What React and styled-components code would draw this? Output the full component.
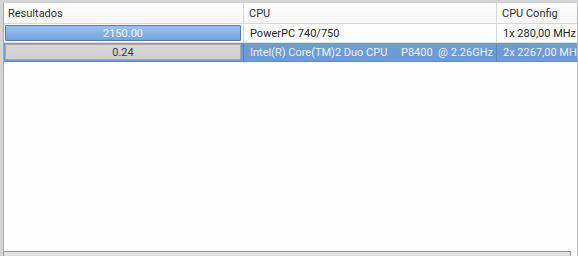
import React from 'react';
import styled, { createGlobalStyle } from 'styled-components';

const GlobalStyle = createGlobalStyle`
  html, body {
    margin: 0;
    padding: 0;
    background: #d4d4d4;
  }
  body {
    font-family: Roboto, "Noto Sans", sans-serif;
  }
`;

const rows = [
  { value: 2150, cpu: 'PowerPC 740/750', config: '1x 280,00 MHz', selected: false },
  { value: 0.24, cpu: 'Intel(R) Core(TM)2 Duo CPU     P8400  @ 2.26GHz', config: '2x 2267,00 MHz', selected: true },
];

function App () {
  return (
    <Frame>
      <GlobalStyle />
      <View>
        <Table>
          <HeadCell>Resultados</HeadCell>
          <HeadCell indent>CPU</HeadCell>
          <HeadCell indent last>CPU Config</HeadCell>
          {rows.map((row, idx) => (
            <React.Fragment key={idx}>
              <BarCell selected={row.selected}>
                <Bar selected={row.selected}>{row.value.toFixed(2)}</Bar>
              </BarCell>
              <Cell selected={row.selected}>{row.cpu}</Cell>
              <Cell selected={row.selected} last>{row.config}</Cell>
            </React.Fragment>
          ))}
        </Table>
        <Scrollbar />
      </View>
    </Frame>
  );
}

const Frame = styled.div`
  width: 578px;
  height: 256px;
  box-sizing: border-box;
  padding: 3px 0 0 3px;
  background: #d4d4d4;
  overflow: hidden;
`;

const View = styled.div`
  height: 100%;
  box-sizing: border-box;
  display: flex;
  flex-direction: column;
  background: #fefefe;
  border-left: 1px solid #a8a8a8;
  border-right: 1px solid #bdbdbd;
`;

const Table = styled.div`
  flex: 1;
  display: grid;
  grid-template-columns: 240px 253px 1fr;
  grid-template-rows: 21px;
  grid-auto-rows: 19px;
  align-content: start;
  overflow: hidden;
`;

const HeadCell = styled.div`
  box-sizing: border-box;
  padding: 0 4px 0 ${(p) => (p.indent ? '5px' : '4px')};
  display: flex;
  align-items: center;
  font-size: 11px;
  color: #303030;
  white-space: nowrap;
  overflow: hidden;
  background: linear-gradient(#ffffff, #f6f6f6);
  border-bottom: 1px solid #d8d8d8;
  border-right: ${(p) => (p.last ? 'none' : '1px solid #d8d8d8')};
`;

const Cell = styled.div`
  box-sizing: border-box;
  padding: 0 0 0 6px;
  display: flex;
  align-items: center;
  font-size: 11px;
  white-space: pre;
  overflow: hidden;
  color: ${(p) => (p.selected ? '#eef3fa' : '#1e1e1e')};
  background: ${(p) => (p.selected ? '#6c9cd3' : 'transparent')};
  border-right: ${(p) => (p.last ? 'none' : p.selected ? '1px solid #5884bb' : '1px solid #d8d8d8')};
  border-bottom: 1px solid ${(p) => (p.selected ? '#5c8ac3' : '#e2e2e2')};
`;

const BarCell = styled(Cell)`
  padding: 1px 2px 1px 1px;
`;

const Bar = styled.div`
  flex: 1;
  height: 100%;
  box-sizing: border-box;
  display: flex;
  align-items: center;
  justify-content: center;
  font-size: 11px;
  border-radius: 1px;
  color: ${(p) => (p.selected ? '#3a3a3a' : '#f2f6fc')};
  border: 1px solid ${(p) => (p.selected ? '#a9a9a9' : '#4a7dbd')};
  background: ${(p) => (p.selected
    ? 'linear-gradient(#d6d6d6, #d0d0d0)'
    : 'linear-gradient(#9cc0ec, #74a3dc)')};
`;

const Scrollbar = styled.div`
  height: 4px;
  margin-left: -1px;
  margin-right: 6px;
  background: #e0e0e0;
  border-top: 1px solid #9a9a9a;
  border-left: 1px solid #9a9a9a;
  border-right: 1px solid #9a9a9a;
`;

export default App;
